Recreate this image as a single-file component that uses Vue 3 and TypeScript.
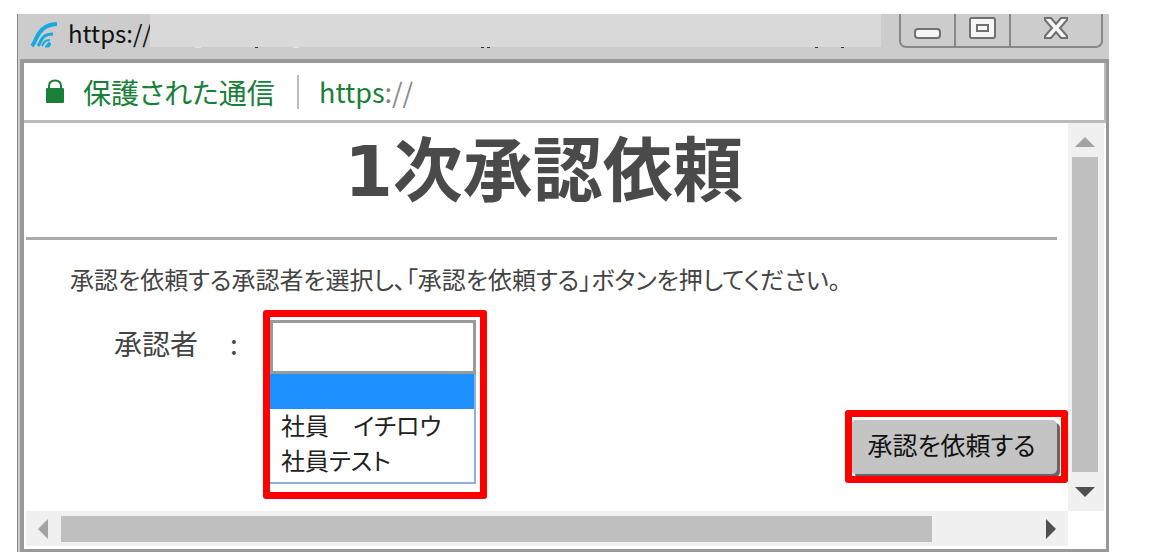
<script setup lang="ts">
import { ref } from 'vue'

interface Approver {
  id: string
  name: string
}

const approvers: Approver[] = [
  { id: '', name: '' },
  { id: 'ichiro', name: '社員　イチロウ' },
  { id: 'test', name: '社員テスト' },
]

const selected = ref<string>('')
</script>

<template>
  <div class="desktop">
    <div class="window">
      <header class="titlebar">
        <svg class="logo" viewBox="0 0 28 26" aria-hidden="true">
          <path d="M2 24C7 19 7 3 27 2" stroke-width="4" />
          <path d="M8 24C12 19 11 12 23 12" stroke-width="3" />
          <path d="M12 24C14 20 15 18 20 18" stroke-width="2" />
          <path class="dot" d="M15 25L19 20L21 22L19 25Z" />
        </svg>
        <span class="title">https://</span>
        <div class="mask">
          <svg class="specks" viewBox="0 0 731 2" preserveAspectRatio="none" aria-hidden="true">
            <path class="pale" d="M45 0h6v1h-6zM143 0h6v1h-6z" />
            <path d="M105 0h3v1h-3zM331 0h3v1h-3zM337 0h3v1h-3zM665 0h3v1h-3zM691 0h3v1h-3z" />
          </svg>
        </div>
        <div class="controls">
          <button type="button" aria-label="最小化">
            <svg width="28" height="28" viewBox="0 0 28 28"><rect x="1" y="15" width="25" height="9" rx="3" /></svg>
          </button>
          <button type="button" aria-label="最大化">
            <svg width="28" height="28" viewBox="0 0 28 28">
              <rect x="1" y="4" width="25" height="20" rx="2" />
              <rect x="8" y="11" width="11" height="6" />
            </svg>
          </button>
          <button type="button" class="close" aria-label="閉じる">
            <svg width="28" height="28" viewBox="0 0 28 28">
              <path d="M3 4H9L14 10L19 4H25V6L18 14L25 22V24H19L14 18L9 24H3V22L10 14L3 6Z" />
            </svg>
          </button>
        </div>
      </header>

      <div class="frame">
        <div class="address">
          <svg class="lock" viewBox="0 0 18 25" aria-hidden="true">
            <path class="shackle" d="M3 11V7Q3 1.500 9 1.500T15 7V11" />
            <rect y="9" width="18" height="15" rx="1" />
          </svg>
          <span class="secure">保護された通信</span>
          <span class="divider"></span>
          <span class="url">https<span class="rest">://</span></span>
        </div>

        <div class="viewport">
          <main class="page">
            <h1>1次承認依頼</h1>
            <hr />
            <p>承認を依頼する承認者を選択し、「承認を依頼する」ボタンを押してください。</p>
            <form class="form" @submit.prevent>
              <label for="approver">承認者</label>
              <span class="colon">:</span>
              <div class="picker highlight">
                <select id="approver" v-model="selected">
                  <option v-for="a in approvers" :key="a.id" :value="a.id">{{ a.name }}</option>
                </select>
                <ul role="listbox" aria-label="承認者">
                  <li
                    v-for="a in approvers"
                    :key="a.id"
                    role="option"
                    :aria-selected="a.id === selected"
                    :class="{ active: a.id === selected }"
                    @click="selected = a.id"
                  >{{ a.name }}</li>
                </ul>
              </div>
              <div class="submit highlight">
                <button type="submit">承認を依頼する</button>
              </div>
            </form>
          </main>

          <div class="vscroll">
            <svg width="20" height="10" viewBox="0 0 20 10"><path class="dim" d="M0 10L10 0L20 10Z" /></svg>
            <div class="thumb"></div>
            <svg width="20" height="10" viewBox="0 0 20 10"><path d="M0 0H20L10 10Z" /></svg>
          </div>
          <div class="hscroll">
            <svg width="10" height="20" viewBox="0 0 10 20"><path class="dim" d="M10 0V20L0 10Z" /></svg>
            <div class="track"><div class="thumb"></div></div>
            <svg width="10" height="20" viewBox="0 0 10 20"><path d="M0 0V20L10 10Z" /></svg>
          </div>
        </div>
      </div>
    </div>
  </div>
</template>

<style>
body {
  background: #fff;
}
</style>

<style scoped>
* {
  box-sizing: border-box;
}

.desktop {
  padding: 14px 41px 5px 17px;
  font-family: "Noto Sans CJK JP", sans-serif;
  font-feature-settings: "palt";
  color: #444;
}

.window {
  background: #ccc;
  border-left: 1px solid #888;
}

.titlebar {
  display: flex;
  align-items: flex-start;
  height: 45px;
  padding: 0 6px 0 12px;
}

.logo {
  width: 28px;
  height: 26px;
  margin-top: 8px;
  fill: none;
  stroke: #18a8e0;
}

.dot {
  fill: #18a8e0;
}

.title {
  width: 82px;
  margin-left: 10px;
  font-size: 24px;
  line-height: 38px;
  color: #111;
  white-space: nowrap;
}

.mask {
  position: relative;
  flex: 1;
  height: 33px;
  background: #d9d9d9;
}

.specks {
  position: absolute;
  top: 100%;
  left: 0;
  width: 100%;
  height: 2px;
  fill: #333;
}

.specks .pale {
  fill: #e4e4e4;
}

.controls {
  display: flex;
  width: 204px;
  height: 34px;
  margin-left: 18px;
  border: 2px solid #888;
  border-top: 0;
  border-radius: 0 0 7px 7px;
}

.controls button {
  display: flex;
  justify-content: center;
  width: 55px;
  padding: 0;
  border: 0;
  border-right: 2px solid #888;
  background: none;
}

.controls .close {
  flex: 1;
  border-right: 0;
}

.controls svg {
  fill: #f6f6f6;
  stroke: #707070;
  stroke-width: 2;
}

.frame {
  margin-left: 2px;
  border: solid #999;
  border-width: 4px 3px 3px 4px;
  background: #fff;
}

.address {
  display: flex;
  align-items: center;
  height: 60px;
  padding-left: 22px;
  border-right: 2px solid #bbb;
  border-bottom: 3px solid #bbb;
  color: #188038;
}

.lock {
  width: 18px;
  height: 25px;
  fill: #188038;
}

.shackle {
  fill: none;
  stroke: #188038;
  stroke-width: 2;
}

.secure {
  width: 194px;
  margin-left: 19px;
  font-size: 28px;
  line-height: 36px;
  white-space: nowrap;
}

.divider {
  width: 2px;
  height: 34px;
  margin: 0 20px;
  background: #bbb;
}

.url {
  font-size: 27px;
  line-height: 36px;
  white-space: nowrap;
}

.rest {
  color: #888;
}

.viewport {
  display: grid;
  grid-template-columns: 1fr 36px;
  grid-template-rows: auto 35px;
  padding: 0 2px 3px;
}

.page {
  padding-right: 11px;
}

h1 {
  margin: 0;
  padding: 4px 0 0 4px;
  font: bold 70px/90px "DejaVu Sans", "Noto Sans CJK JP", sans-serif;
  font-feature-settings: normal;
  color: #4a4a4a;
  text-align: center;
}

hr {
  height: 3px;
  margin: 20px 0 0;
  border: 0;
  background: #aaa;
}

p {
  margin: 22px 0 0 44px;
  font-size: 24px;
  line-height: 34px;
  white-space: nowrap;
}

.form {
  display: flex;
  align-items: flex-start;
  margin-top: 24px;
  padding: 0 0 27px 88px;
  font-size: 28px;
}

label,
.colon {
  line-height: 46px;
}

.colon {
  width: 40px;
  margin-left: 32px;
}

.highlight {
  position: relative;
}

.highlight::after {
  position: absolute;
  inset: -10px -11px -15px -7px;
  border: 7px solid #f00;
  border-radius: 3px;
  content: "";
  pointer-events: none;
}

.picker {
  width: 206px;
}

select {
  display: block;
  width: 100%;
  height: 54px;
  padding: 0 8px;
  border: 3px solid #9a9a9a;
  border-radius: 0;
  background: #fff;
  appearance: none;
  font: inherit;
}

ul {
  margin: 0;
  padding: 0 0 3px;
  border: solid #8fb0dd;
  border-width: 0 2px 2px 0;
  list-style: none;
}

li {
  height: 35px;
  padding-left: 11px;
  font-size: 24px;
  line-height: 32px;
  color: #222;
  white-space: nowrap;
}

.active {
  background: #1e90ff;
}

.submit {
  align-self: flex-end;
  margin-left: auto;
  margin-bottom: 10px;
}

.submit::after {
  inset: -10px -11px -9px -7px;
}

.submit button {
  display: block;
  width: 205px;
  height: 54px;
  padding: 0 6px 6px 0;
  border: 0;
  border-radius: 3px 5px 5px 3px;
  background: #c4c4c4;
  box-shadow: 3px 3px #666;
  font: inherit;
  font-size: 25px;
  font-feature-settings: inherit;
  color: #111;
}

.vscroll,
.hscroll {
  display: flex;
  align-items: center;
  background: #f0f0f0;
  fill: #505050;
}

.vscroll {
  flex-direction: column;
  gap: 10px;
  padding: 14px 2px 14px 0;
}

.hscroll {
  padding: 0 12px;
}

.dim {
  fill: #a3a3a3;
}

.thumb {
  background: #bfbfbf;
}

.vscroll .thumb {
  flex: 1;
  width: 26px;
  margin-bottom: 5px;
}

.track {
  flex: 1;
  margin: 0 6px 0 13px;
}

.hscroll .thumb {
  width: 89%;
  height: 26px;
}
</style>
